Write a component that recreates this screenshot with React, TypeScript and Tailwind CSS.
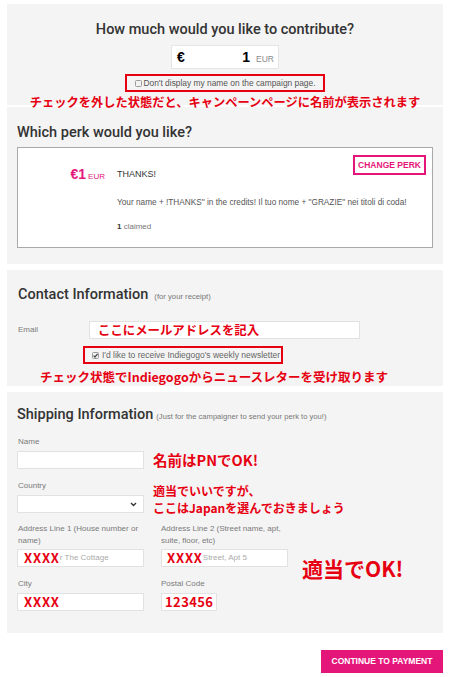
import React from "react";

const jp = "font-['Noto_Sans_CJK_JP',sans-serif] font-bold text-[#e60012]";
const head = "font-['Roboto',Arial,sans-serif] font-medium text-[14.5px] leading-[18px] text-[#333333]";
const label = "text-[8px] leading-[12px] text-[#7a7a7a]";
const input = "h-[18px] bg-white border border-[#e2e2e2] box-border";

function Box({ checked }: { checked?: boolean }) {
  return (
    <svg width="7" height="7" viewBox="0 0 7 7" className="shrink-0">
      <rect x="0.5" y="0.5" width="6" height="6" rx="1" fill="#f3f3f3" stroke="#9a9a9a" />
      {checked && <path d="M1.6 3.6 L3 5 L5.6 1.8" fill="none" stroke="#444" strokeWidth="1.2" />}
    </svg>
  );
}

export default function App() {
  return (
    <div className="min-h-[677px] bg-white pt-[4px] px-[7px] font-['Liberation_Sans',Arial,sans-serif]">
      {/* Panel 1 */}
      <section className="bg-[#f4f4f4] pt-[17px] flex flex-col items-center">
        <h2 className={`${head}`}>How much would you like to contribute?</h2>
        <div className="mt-[6px] w-[108px] h-[24px] bg-white border border-[#e6e6e6] box-border flex items-center justify-between pl-[5px] pr-[4px]">
          <span className="text-[14px] font-bold text-black leading-none">€</span>
          <span className="flex items-baseline">
            <span className="text-[14px] font-bold text-black leading-none">1</span>
            <span className="text-[8.5px] text-[#8a8a8a] ml-[6px] leading-none">EUR</span>
          </span>
        </div>
        <div className="mt-[5px] w-[200px] h-[18px] border-2 border-[#e60012] box-border flex items-center justify-center gap-[2px]">
          <Box />
          <span className="text-[8.4px] text-[#555] leading-none whitespace-nowrap">Don't display my name on the campaign page.</span>
        </div>
        <div className={`${jp} mt-[2px] -mb-[5px] relative z-10 text-[12.25px] leading-[16px] whitespace-nowrap`}>
          チェックを外した状態だと、キャンペーンページに名前が表示されます
        </div>
      </section>

      {/* Panel 2 */}
      <section className="mt-[2px] bg-[#f4f4f4] pt-[17px] pb-[16px] px-[10px]">
        <h2 className={head}>Which perk would you like?</h2>
        <div className="mt-[5px] h-[101px] bg-white border border-[#a9a9a9] box-border flex">
          <div className="w-[87px] mt-[18px] text-right leading-[16px]">
            <span className="text-[14px] font-bold text-[#e5167a]">€1</span>
            <span className="text-[8px] text-[#e5167a] ml-[2px]">EUR</span>
          </div>
          <div className="ml-[12px] flex-1 flex flex-col">
            <div className="flex items-start justify-between">
              <span className="mt-[20px] text-[9px] leading-[12px] text-[#333]">THANKS!</span>
              <div className="mt-[7px] mr-[6px] w-[73px] h-[20px] border-2 border-[#e5167a] box-border flex items-center justify-center text-[8.5px] font-bold text-[#e5167a]">
                CHANGE PERK
              </div>
            </div>
            <div className="mt-[17px] text-[8.25px] leading-[12px] text-[#555] whitespace-nowrap">
              Your name + !THANKS" in the credits! Il tuo nome + "GRAZIE" nei titoli di coda!
            </div>
            <div className="mt-[12px] text-[8px] leading-[12px] text-[#777]">
              <span className="font-bold text-[#333]">1</span> claimed
            </div>
          </div>
        </div>
      </section>

      {/* Panel 3 */}
      <section className="mt-[6px] bg-[#f4f4f4] pt-[16px] pb-[1px] pl-[11px]">
        <div className="flex items-baseline">
          <h2 className={head}>Contact Information</h2>
          <span className="ml-[6px] text-[7.7px] text-[#777]">(for your receipt)</span>
        </div>
        <div className="mt-[17px] flex items-center">
          <span className={`${label} w-[71px]`}>Email</span>
          <div className={`${input} w-[271px] flex items-center pl-[8px]`}>
            <span className={`${jp} text-[12.4px] leading-[18px] whitespace-nowrap`}>ここにメールアドレスを記入</span>
          </div>
        </div>
        <div className="mt-[7px] ml-[65px] w-[200px] h-[18px] border-2 border-[#e60012] box-border flex items-center pl-[7px] gap-[3px]">
          <Box checked />
          <span className="text-[8.5px] text-[#666] leading-none whitespace-nowrap">I'd like to receive Indiegogo's weekly newsletter</span>
        </div>
        <div className={`${jp} mt-[5px] ml-[22px] text-[12.5px] leading-[16px] whitespace-nowrap`}>
          チェック状態でIndiegogoからニュースレターを受け取ります
        </div>
      </section>

      {/* Panel 4 */}
      <section className="mt-[6px] bg-[#f4f4f4] pt-[14px] pb-[22px] pl-[10px]">
        <div className="flex items-baseline">
          <h2 className={head}>Shipping Information</h2>
          <span className="ml-[3px] text-[7.6px] text-[#777] whitespace-nowrap">(Just for the campaigner to send your perk to you!)</span>
        </div>
        <div className={`${label} mt-[12px] ml-[1px]`}>Name</div>
        <div className="mt-[3px] flex items-center">
          <div className={`${input} w-[127px]`} />
          <span className={`${jp} ml-[9px] text-[14.5px] leading-[18px] whitespace-nowrap`}>名前はPNでOK!</span>
        </div>
        <div className="flex items-end">
          <div className="flex flex-col">
            <div className={`${label} mt-[11px] ml-[1px]`}>Country</div>
            <div className={`${input} mt-[3px] w-[127px] flex items-center justify-end pr-[6px]`}>
              <svg width="7" height="5" viewBox="0 0 7 5">
                <path d="M1 1 L3.5 3.5 L6 1" fill="none" stroke="#333" strokeWidth="1.4" />
              </svg>
            </div>
          </div>
          <div className={`${jp} ml-[9px] -mb-[3px] text-[12px] leading-[17px] whitespace-nowrap`}>
            適当でいいですが、<br />ここはJapanを選んでおきましょう
          </div>
        </div>
        <div className="flex">
          <div className="mt-[10px] grid grid-cols-[127px_127px] gap-x-[17px]">
            <div className="flex flex-col">
              <div className={`${label} ml-[1px] whitespace-nowrap`}>Address Line 1 (House number or<br />name)</div>
              <div className={`${input} mt-[2px] flex items-center pl-[6px] overflow-hidden`}>
                <span className={`${jp} text-[13px] tracking-[0.8px] leading-[16px]`}>XXXX</span>
                <span className="text-[8px] text-[#aaa] whitespace-nowrap">r The Cottage</span>
              </div>
              <div className={`${label} mt-[11px] ml-[1px]`}>City</div>
              <div className={`${input} mt-[3px] flex items-center pl-[6px]`}>
                <span className={`${jp} text-[13px] tracking-[0.8px] leading-[16px]`}>XXXX</span>
              </div>
            </div>
            <div className="flex flex-col">
              <div className={`${label} whitespace-nowrap`}>Address Line 2 (Street name, apt,<br />suite, floor, etc)</div>
              <div className={`${input} mt-[2px] flex items-center pl-[5px] overflow-hidden`}>
                <span className={`${jp} text-[13px] tracking-[0.8px] leading-[16px]`}>XXXX</span>
                <span className="text-[8px] text-[#aaa] whitespace-nowrap">Street, Apt 5</span>
              </div>
              <div className={`${label} mt-[11px]`}>Postal Code</div>
              <div className={`${input} mt-[3px] w-[56px] flex items-center pl-[3px]`}>
                <span className={`${jp} text-[13px] tracking-[0.4px] leading-[16px]`}>123456</span>
              </div>
            </div>
          </div>
          <div className={`${jp} ml-[14px] mt-[42px] text-[21px] leading-[26px] whitespace-nowrap`}>適当でOK!</div>
        </div>
      </section>

      <div className="mt-[17px] flex justify-end">
        <div className="w-[122px] h-[23px] bg-[#e5167a] flex items-center justify-center text-white text-[8.5px] font-bold">
          CONTINUE TO PAYMENT
        </div>
      </div>
    </div>
  );
}
